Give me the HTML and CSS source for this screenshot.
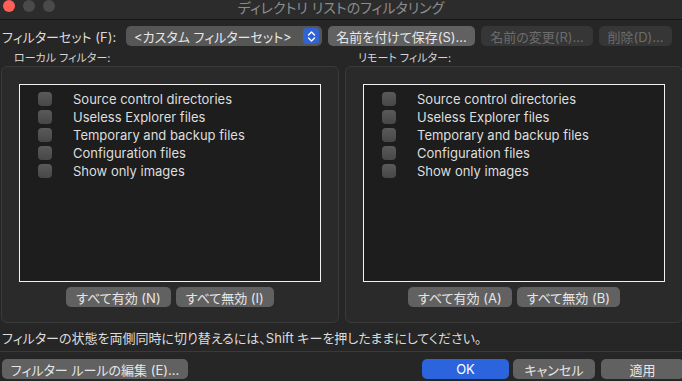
FILE: index.html
```html
<!DOCTYPE html>
<html lang="ja">
<head>
    <meta charset="UTF-8">
    <title>ディレクトリ リストのフィルタリング</title>
    <link rel="stylesheet" href="styles.css">
</head>
<body>
    <div class="window">
        <div class="titlebar">
            <div class="lights">
                <span class="light red"></span>
                <span class="light"></span>
                <span class="light"></span>
            </div>
            <div class="title">ディレクトリ リストのフィルタリング</div>
        </div>

        <div class="set-row">
            <span class="set-label">フィルターセット (F):</span>
            <div class="popup">
                <span>&lt;カスタム フィルターセット&gt;</span>
                <span class="stepper">
                    <svg width="9" height="13" viewBox="0 0 9 13"><path d="M1.5 5 L4.5 2 L7.5 5 M1.5 8 L4.5 11 L7.5 8" fill="none" stroke="#fff" stroke-width="1.4" stroke-linecap="round" stroke-linejoin="round"/></svg>
                </span>
            </div>
            <button class="btn save">名前を付けて保存(S)...</button>
            <button class="btn rename" disabled>名前の変更(R)...</button>
            <button class="btn delete" disabled>削除(D)...</button>
        </div>

        <div class="panels">
            <div class="panel">
                <div class="panel-label">ローカル フィルター:</div>
                <div class="group">
                    <div class="list">
                        <label class="item"><span class="check"></span>Source control directories</label>
                        <label class="item"><span class="check"></span>Useless Explorer files</label>
                        <label class="item"><span class="check"></span>Temporary and backup files</label>
                        <label class="item"><span class="check"></span>Configuration files</label>
                        <label class="item"><span class="check"></span>Show only images</label>
                    </div>
                    <div class="group-buttons">
                        <button class="btn small">すべて有効 (N)</button>
                        <button class="btn small">すべて無効 (I)</button>
                    </div>
                </div>
            </div>
            <div class="panel">
                <div class="panel-label">リモート フィルター:</div>
                <div class="group">
                    <div class="list">
                        <label class="item"><span class="check"></span>Source control directories</label>
                        <label class="item"><span class="check"></span>Useless Explorer files</label>
                        <label class="item"><span class="check"></span>Temporary and backup files</label>
                        <label class="item"><span class="check"></span>Configuration files</label>
                        <label class="item"><span class="check"></span>Show only images</label>
                    </div>
                    <div class="group-buttons">
                        <button class="btn small">すべて有効 (A)</button>
                        <button class="btn small">すべて無効 (B)</button>
                    </div>
                </div>
            </div>
        </div>

        <div class="hint">フィルターの状態を両側同時に切り替えるには、Shift キーを押したままにしてください。</div>

        <div class="footer">
            <button class="btn edit">フィルター ルールの編集 (E)...</button>
            <div class="spacer"></div>
            <button class="btn ok">OK</button>
            <button class="btn cancel">キャンセル</button>
            <button class="btn apply">適用</button>
        </div>
    </div>
</body>
</html>
```

FILE: styles.css
```css
html, body {
    margin: 0;
    padding: 0;
}

body {
    width: 682px;
    height: 381px;
    overflow: hidden;
    background-color: #262626;
    color: #dcdcdc;
    font-family: Inter, "Noto Sans CJK JP", sans-serif;
    font-size: 13px;
    font-feature-settings: "palt";
}

.window {
    width: 690px;
}

.titlebar {
    height: 19px;
    border-bottom: 1px solid #141414;
    background-color: #2c2c2c;
    display: flex;
    align-items: center;
    position: relative;
}

.lights {
    display: flex;
    gap: 8px;
    margin-left: 3px;
    margin-top: -7px;
}

.light {
    width: 12px;
    height: 12px;
    border-radius: 50%;
    background-color: #4a4a4a;
}

.light.red {
    background-color: #fe5f57;
}

.title {
    position: absolute;
    left: 0;
    width: 682px;
    top: -3px;
    text-align: center;
    color: #8c8c8c;
    font-size: 14px;
}

.set-row {
    display: flex;
    align-items: center;
    height: 20px;
    margin-top: 6px;
    padding-left: 2px;
}

.set-label {
    width: 124px;
}

.popup {
    width: 196px;
    height: 20px;
    box-sizing: border-box;
    border-radius: 5px;
    background-color: #565656;
    display: flex;
    align-items: center;
    justify-content: space-between;
    padding: 0 3px 0 8px;
    color: #e6e6e6;
}

.stepper {
    width: 16px;
    height: 16px;
    border-radius: 4px;
    background-color: #2f63d6;
    display: flex;
    align-items: center;
    justify-content: center;
}

.btn {
    font: inherit;
    font-size: 13px;
    color: #e6e6e6;
    background-color: #616161;
    border: none;
    border-radius: 5px;
    height: 20px;
    padding: 0;
    white-space: nowrap;
}

.btn:disabled {
    background-color: #363636;
    color: #6c6c6c;
}

.save {
    width: 147px;
    margin-left: 6px;
}

.rename {
    width: 112px;
    margin-left: 6px;
}

.delete {
    width: 73px;
    margin-left: 6px;
}

.panels {
    display: flex;
    gap: 6px;
    padding-left: 1px;
    margin-top: 5px;
}

.panel {
    width: 338px;
}

.panel-label {
    font-size: 11px;
    height: 15px;
    line-height: 15px;
    padding-left: 13px;
    color: #d6d6d6;
}

.group {
    height: 257px;
    box-sizing: border-box;
    border: 1px solid #3a3a3a;
    border-radius: 6px;
    background-color: #2a2a2a;
    padding: 17px 17px 0 17px;
}

.list {
    height: 198px;
    box-sizing: border-box;
    border: 1px solid #f2f2f2;
    background-color: #1d1d1d;
    padding: 5px 0 0 18px;
}

.item {
    display: flex;
    align-items: center;
    height: 18px;
    color: #dedede;
}

.check {
    width: 14px;
    height: 14px;
    border-radius: 4px;
    background: linear-gradient(#5a5a5a, #474747);
    margin-right: 21px;
}

.group-buttons {
    display: flex;
    justify-content: center;
    gap: 5px;
    margin-top: 5px;
}

.small {
    padding: 0 10px;
    font-size: 13px;
}

.hint {
    height: 20px;
    line-height: 20px;
    padding-left: 2px;
    margin-top: 5px;
    font-size: 13px;
}

.footer {
    border-top: 1px solid #3a3a3a;
    margin-top: 3px;
    padding: 7px 0 0 2px;
    display: flex;
    width: 682px;
}

.spacer {
    flex: 1;
}

.edit {
    width: 186px;
}

.ok {
    width: 87px;
    background-color: #2b64dd;
    color: #ffffff;
}

.cancel {
    width: 82px;
    margin-left: 4px;
}

.apply {
    width: 83px;
    margin-left: 6px;
}
```
